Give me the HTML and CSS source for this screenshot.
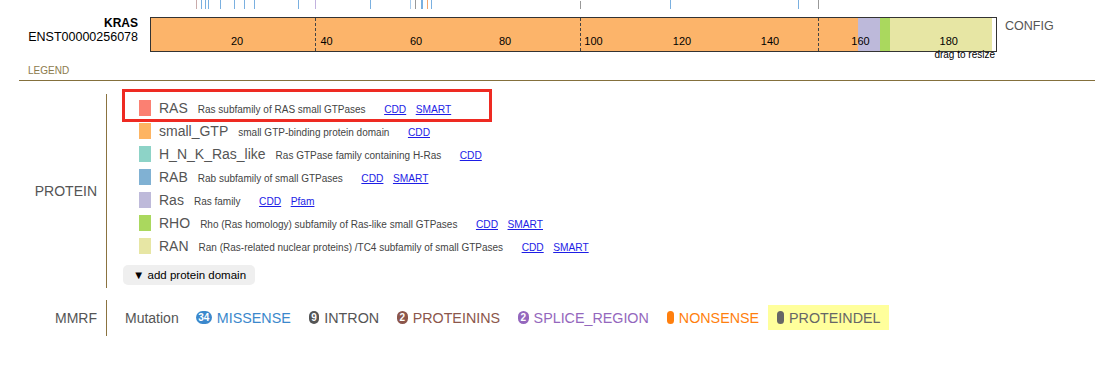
FILE: index.html
```html
<!DOCTYPE html>
<html lang="en">
<head>
  <meta charset="UTF-8" />
  <title>KRAS protein view</title>
  <link rel="stylesheet" href="styles.css">
</head>
<body>
  <div class="gene-row">
    <div class="gene-label">
      <div class="gene-name">KRAS</div>
      <div class="gene-iso">ENST00000256078</div>
    </div>
    <div class="track">
      <svg width="847" height="64" viewBox="0 0 847 64">
        <!-- mutation ticks -->
        <g stroke-width="1">
          <line x1="46.5" y1="0" x2="46.5" y2="9" stroke="#c9aaaa" />
          <line x1="51.5" y1="0" x2="51.5" y2="9" stroke="#7ab0e0" />
          <line x1="55.5" y1="0" x2="55.5" y2="9" stroke="#7ab0e0" />
          <line x1="58.5" y1="0" x2="58.5" y2="9" stroke="#7ab0e0" />
          <line x1="70.5" y1="0" x2="70.5" y2="9" stroke="#7ab0e0" />
          <line x1="84.5" y1="0" x2="84.5" y2="9" stroke="#7ab0e0" />
          <line x1="94.5" y1="0" x2="94.5" y2="9" stroke="#7ab0e0" />
          <line x1="104.5" y1="0" x2="104.5" y2="9" stroke="#7ab0e0" />
          <line x1="148.5" y1="0" x2="148.5" y2="9" stroke="#7ab0e0" />
          <line x1="165.5" y1="0" x2="165.5" y2="9" stroke="#c2b2de" />
          <line x1="220.5" y1="0" x2="220.5" y2="9" stroke="#7ab0e0" />
          <line x1="260.5" y1="0" x2="260.5" y2="9" stroke="#a8cbec" />
          <line x1="265.5" y1="0" x2="265.5" y2="9" stroke="#999" />
          <line x1="271.5" y1="0" x2="271.5" y2="9" stroke="#7ab0e0" />
          <line x1="272.5" y1="0" x2="272.5" y2="9" stroke="#7ab0e0" />
          <line x1="277.5" y1="0" x2="277.5" y2="9" stroke="#f5a66e" />
          <line x1="281.5" y1="0" x2="281.5" y2="9" stroke="#7ab0e0" />
          <line x1="430.5" y1="1" x2="430.5" y2="9" stroke="#999" />
          <line x1="520.5" y1="0" x2="520.5" y2="9" stroke="#7ab0e0" />
          <line x1="648.5" y1="0" x2="648.5" y2="9" stroke="#7ab0e0" />
          <line x1="668.5" y1="0" x2="668.5" y2="9" stroke="#999" />
        </g>
        <!-- domains -->
        <rect x="0" y="17" width="708" height="35" fill="#fcb46a" />
        <rect x="708" y="17" width="22" height="35" fill="#bdb9da" />
        <rect x="730" y="17" width="10" height="35" fill="#aad85e" />
        <rect x="740" y="17" width="102" height="35" fill="#e7e6a4" />
        <rect x="842" y="17" width="5" height="35" fill="#fff" />
        <rect x="0.5" y="17.5" width="846" height="34" fill="none" stroke="#333" />
        <!-- exon boundaries -->
        <g stroke="#444" stroke-dasharray="3,2">
          <line x1="165.5" y1="18" x2="165.5" y2="51" />
          <line x1="430.5" y1="18" x2="430.5" y2="51" />
          <line x1="668.5" y1="18" x2="668.5" y2="51" />
        </g>
        <g class="axis" text-anchor="middle">
          <text x="87" y="45">20</text>
          <text x="176.5" y="45">40</text>
          <text x="266" y="45">60</text>
          <text x="355" y="45">80</text>
          <text x="443.5" y="45">100</text>
          <text x="532" y="45">120</text>
          <text x="620" y="45">140</text>
          <text x="710.5" y="45">160</text>
          <text x="798.7" y="45">180</text>
        </g>
        <text class="resize" x="845" y="58" text-anchor="end">drag to resize</text>
      </svg>
    </div>
    <div class="config">CONFIG</div>
  </div>

  <div class="legend-head">LEGEND</div>

  <div class="legend-sec sec-protein">
    <div class="sec-label">PROTEIN</div>
    <div class="sec-body">
      <div class="dom-row hl">
        <span class="swatch" style="background:#fb8072"></span>
        <span class="dom-name">RAS</span>
        <span class="dom-desc">Ras subfamily of RAS small GTPases</span>
        <a class="dom-link">CDD</a><a class="dom-link">SMART</a>
      </div>
      <div class="dom-row">
        <span class="swatch" style="background:#fdb462"></span>
        <span class="dom-name">small_GTP</span>
        <span class="dom-desc">small GTP-binding protein domain</span>
        <a class="dom-link">CDD</a>
      </div>
      <div class="dom-row">
        <span class="swatch" style="background:#8dd3c7"></span>
        <span class="dom-name">H_N_K_Ras_like</span>
        <span class="dom-desc">Ras GTPase family containing H-Ras</span>
        <a class="dom-link">CDD</a>
      </div>
      <div class="dom-row">
        <span class="swatch" style="background:#80b1d3"></span>
        <span class="dom-name">RAB</span>
        <span class="dom-desc">Rab subfamily of small GTPases</span>
        <a class="dom-link">CDD</a><a class="dom-link">SMART</a>
      </div>
      <div class="dom-row">
        <span class="swatch" style="background:#bebada"></span>
        <span class="dom-name">Ras</span>
        <span class="dom-desc">Ras family</span>
        <a class="dom-link">CDD</a><a class="dom-link">Pfam</a>
      </div>
      <div class="dom-row">
        <span class="swatch" style="background:#aad85e"></span>
        <span class="dom-name">RHO</span>
        <span class="dom-desc">Rho (Ras homology) subfamily of Ras-like small GTPases</span>
        <a class="dom-link">CDD</a><a class="dom-link">SMART</a>
      </div>
      <div class="dom-row">
        <span class="swatch" style="background:#e7e6a4"></span>
        <span class="dom-name">RAN</span>
        <span class="dom-desc">Ran (Ras-related nuclear proteins) /TC4 subfamily of small GTPases</span>
        <a class="dom-link">CDD</a><a class="dom-link">SMART</a>
      </div>
      <button class="add-btn">&#9660; add protein domain</button>
    </div>
  </div>

  <div class="legend-sec sec-mmrf">
    <div class="sec-label">MMRF</div>
    <div class="sec-body">
      <span class="mut-title">Mutation</span>
      <div class="mut-item missense"><span class="badge">34</span>MISSENSE</div>
      <div class="mut-item intron"><span class="badge">9</span>INTRON</div>
      <div class="mut-item proteinins"><span class="badge">2</span>PROTEININS</div>
      <div class="mut-item splice"><span class="badge">2</span>SPLICE_REGION</div>
      <div class="mut-item nonsense"><span class="badge"></span>NONSENSE</div>
      <div class="mut-item proteindel on"><span class="badge"></span>PROTEINDEL</div>
    </div>
  </div>
</body>
</html>
```

FILE: styles.css
```css
body {
  margin: 0;
  width: 1119px;
  height: 369px;
  overflow: hidden;
  background: #fff;
  color: #333;
  font-family: "Liberation Sans", Arial, sans-serif;
}

/* gene track */
.gene-row {
  display: flex;
  height: 64px;
}

.gene-label {
  width: 138px;
  padding-top: 17px;
  text-align: right;
  line-height: 12px;
  color: #000;
}

.gene-name {
  font-size: 12px;
  font-weight: bold;
}

.gene-iso {
  font-size: 12.5px;
  margin-top: 1.5px;
}

.track {
  width: 847px;
  margin-left: 12px;
}

.track svg {
  display: block;
  overflow: visible;
}

.axis text {
  font-size: 11px;
  fill: #000;
}

.resize {
  font-size: 10px;
  fill: #000;
}

.config {
  margin-left: 8px;
  padding-top: 19px;
  font-size: 12.5px;
  line-height: 15px;
  color: #555;
}

/* legend */
.legend-head {
  margin: 0 24px 0 19px;
  padding: 1px 0 3px 9px;
  font-size: 10px;
  line-height: 12px;
  color: #8b7a4c;
  border-bottom: 1px solid #84703c;
}

.legend-sec {
  display: flex;
}

.sec-protein {
  margin-top: 13px;
}

.sec-mmrf {
  margin-top: 12px;
}

.sec-label {
  width: 97px;
  margin-right: 9px;
  align-self: center;
  text-align: right;
  font-size: 14px;
  color: #555;
}

.sec-body {
  border-left: 1px solid #8b7340;
}

.sec-protein .sec-body {
  padding: 2.5px 0 3px 16px;
}

.dom-row {
  position: relative;
  display: flex;
  align-items: baseline;
  height: 23px;
  line-height: 23px;
  padding-left: 16px;
}

.dom-row.hl::after {
  content: "";
  position: absolute;
  left: -1px;
  top: -7.5px;
  width: 370px;
  height: 33px;
  border: 3px solid #ee2a22;
  box-sizing: border-box;
}

.swatch {
  align-self: center;
  width: 12px;
  height: 16px;
  margin-right: 8px;
}

.dom-name {
  margin-right: 10px;
  font-size: 14px;
  color: #555;
}

.dom-desc {
  margin-right: 18.5px;
  font-size: 10px;
  color: #444;
}

.dom-link {
  margin-right: 9.5px;
  font-size: 10.2px;
  color: #1d1de6;
  text-decoration: underline;
  cursor: pointer;
}

.add-btn {
  display: block;
  margin-top: 7px;
  height: 20.5px;
  padding: 0 9px 0 10px;
  border: none;
  border-radius: 5px;
  background: #efefef;
  font-family: inherit;
  font-size: 11.5px;
  color: #000;
  cursor: pointer;
}

/* mutation legend */
.sec-mmrf .sec-body {
  display: flex;
  align-items: center;
  padding: 5px 0 6px 18px;
}

.mut-title {
  margin-right: 8px;
  font-size: 14px;
  color: #555;
}

.mut-item {
  display: flex;
  align-items: center;
  gap: 5px;
  height: 25px;
  padding: 0 9px;
  font-size: 14.3px;
}

.mut-item.on {
  background: #ffff9c;
}

.badge {
  height: 13px;
  min-width: 7px;
  padding: 0 2.5px;
  box-sizing: border-box;
  border-radius: 7px;
  font-size: 10px;
  font-weight: bold;
  line-height: 13px;
  text-align: center;
  color: #fff;
}

.missense { color: #3b88cc; }
.missense .badge { background: #3b88cc; }
.intron { color: #555; }
.intron .badge { background: #555; }
.proteinins { color: #8c564b; }
.proteinins .badge { background: #8c564b; }
.splice { color: #9467bd; }
.splice .badge { background: #9467bd; }
.nonsense { color: #ff7f0e; }
.nonsense .badge { background: #ff7f0e; }
.proteindel { color: #666; }
.proteindel .badge { background: #666; }
```
